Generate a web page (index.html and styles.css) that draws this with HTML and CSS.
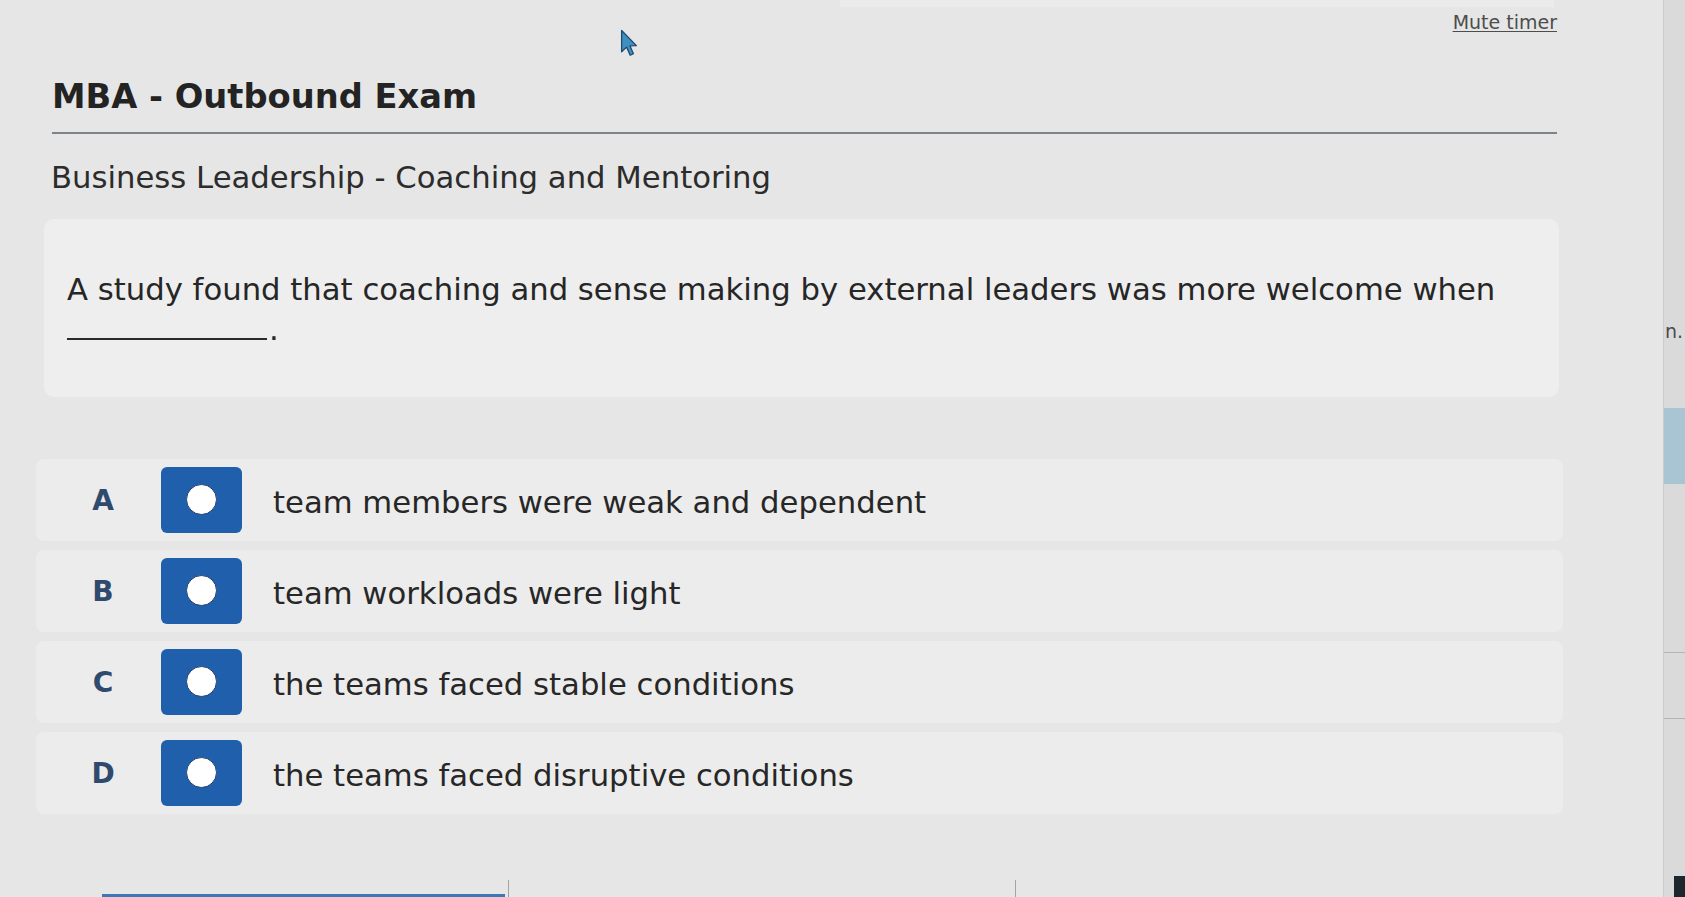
FILE: index.html
```html
<!DOCTYPE html>
<html lang="en">
<head>
<meta charset="utf-8">
<title>MBA - Outbound Exam</title>
<link rel="stylesheet" href="styles.css">
</head>
<body>
<div class="screen">
  <main class="main">
    <div class="timerbar"></div>
    <div class="topbar"><a class="mute" href="#">Mute timer</a></div>
    <div class="header"><h1 class="title">MBA - Outbound Exam</h1></div>
    <h2 class="subtitle">Business Leadership - Coaching and Mentoring</h2>
    <section class="question">
      <p>A study found that coaching and sense making by external leaders was more welcome when<br><span class="blank"></span>.</p>
    </section>
    <ul class="options">
      <li class="option"><span class="letter">A</span><span class="radio"><span class="dot"></span></span><span class="opt-text">team members were weak and dependent</span></li>
      <li class="option"><span class="letter">B</span><span class="radio"><span class="dot"></span></span><span class="opt-text">team workloads were light</span></li>
      <li class="option"><span class="letter">C</span><span class="radio"><span class="dot"></span></span><span class="opt-text">the teams faced stable conditions</span></li>
      <li class="option"><span class="letter">D</span><span class="radio"><span class="dot"></span></span><span class="opt-text">the teams faced disruptive conditions</span></li>
    </ul>
    <footer class="footer">
      <span class="footbar"></span>
      <span class="tick"></span>
      <span class="tick tick2"></span>
    </footer>
  </main>
  <aside class="side">
    <span class="side-text">n.</span>
    <span class="side-band"></span>
    <span class="side-line"></span>
    <span class="side-line side-line2"></span>
    <span class="side-dark"></span>
  </aside>
  <svg class="cursor" width="18" height="28" viewBox="0 0 12 19" aria-hidden="true">
    <path d="M1 1 L1 15.5 L4.4 12.3 L6.8 17.8 L9 16.8 L6.6 11.4 L11 11.3 Z" fill="#3f8fc0" stroke="#1c4c70" stroke-width="0.9" stroke-linejoin="round"/>
  </svg>
</div>
</body>
</html>
```
FILE: styles.css
```css
html, body {
  margin: 0;
  padding: 0;
}
body {
  background: #e4e4e4;
  font-family: "DejaVu Sans", Verdana, sans-serif;
  color: #2a2a2a;
}
.screen {
  position: relative;
  display: flex;
  height: 897px;
  overflow: hidden;
}
.main {
  width: 1663px;
  flex: none;
  box-sizing: border-box;
  padding-left: 36px;
  display: flex;
  flex-direction: column;
  background: #e6e6e6;
}
.timerbar {
  height: 7px;
  width: 714px;
  margin-left: 804px;
  background: #ebebeb;
}
.topbar {
  width: 1521px;
  display: flex;
  justify-content: flex-end;
  padding-top: 4px;
}
.mute {
  font-size: 19px;
  line-height: 22px;
  color: #4d4d4d;
  text-decoration: underline;
  text-underline-offset: 2px;
}
.header {
  width: 1505px;
  margin: 44px 0 0 16px;
  padding-bottom: 15px;
  border-bottom: 2px solid #7b8489;
}
.title {
  margin: 0;
  font-size: 33.7px;
  line-height: 40px;
  font-weight: bold;
  color: #232323;
}
.subtitle {
  margin: 25px 0 0 15px;
  font-size: 30.7px;
  line-height: 38px;
  font-weight: normal;
  color: #2c2c2c;
}
.question {
  width: 1515px;
  box-sizing: border-box;
  margin: 22px 0 0 8px;
  padding: 51px 20px 47px 23px;
  border-radius: 10px;
  background: #eeeeee;
}
.question p {
  margin: 0;
  font-size: 30.7px;
  line-height: 40px;
  color: #262626;
}
.blank {
  display: inline-block;
  width: 200px;
  height: 2px;
  background: #2a2a2a;
  vertical-align: baseline;
  margin-right: 2px;
}
.options {
  list-style: none;
  margin: 62px 0 0 0;
  padding: 0;
  width: 1527px;
  display: flex;
  flex-direction: column;
  gap: 9px;
}
.option {
  height: 82px;
  display: flex;
  align-items: center;
  background: #ececec;
  border-radius: 8px;
}
.letter {
  width: 125px;
  box-sizing: border-box;
  padding-left: 9px;
  text-align: center;
  font-size: 28px;
  font-weight: bold;
  color: #2f4a6c;
}
.radio {
  width: 81px;
  height: 66px;
  flex: none;
  border-radius: 6px;
  background: #1f5fac;
  display: flex;
  align-items: center;
  justify-content: center;
}
.dot {
  width: 31px;
  height: 31px;
  box-sizing: border-box;
  border-radius: 50%;
  background: #ffffff;
  border: 1.5px solid #24426d;
  margin-top: -2px;
}
.opt-text {
  margin-left: 31px;
  padding-top: 6px;
  font-size: 30.7px;
  line-height: 36px;
  color: #272727;
}
.footer {
  margin-top: auto;
  height: 17px;
  display: flex;
  align-items: flex-end;
}
.footbar {
  width: 403px;
  height: 3px;
  margin-left: 66px;
  background: #3b78b8;
}
.tick {
  width: 1px;
  height: 17px;
  margin-left: 3px;
  background: #a3a3a3;
}
.tick2 {
  margin-left: 506px;
}
.side {
  flex: 1;
  display: flex;
  flex-direction: column;
  background: #dadada;
  border-left: 1px solid #cccccc;
  overflow: hidden;
}
.side-text {
  margin: 322px 0 0 1px;
  font-size: 19px;
  line-height: 18px;
  color: #4a4a4a;
  white-space: nowrap;
}
.side-band {
  margin-top: 68px;
  height: 76px;
  background: #a9c5d3;
}
.side-line {
  margin-top: 168px;
  height: 1px;
  background: #b3b3b3;
}
.side-line2 {
  margin-top: 65px;
}
.side-dark {
  margin-top: auto;
  margin-left: 10px;
  height: 21px;
  background: #1c262c;
}
.cursor {
  position: absolute;
  left: 620px;
  top: 29px;
}
```
